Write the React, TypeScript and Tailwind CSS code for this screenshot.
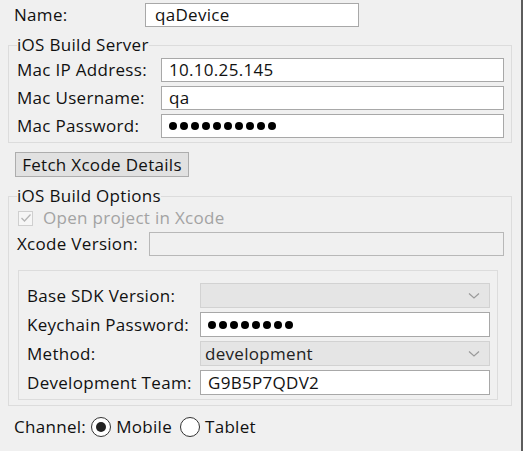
import React from 'react';

const font = { fontFamily: '"Open Sans", "Noto Sans", Arial, sans-serif' };

const Chevron = () => (
    <svg width="12" height="8" viewBox="0 0 12 8" className="shrink-0">
        <path d="M1 1.5 L6 6 L11 1.5" fill="none" stroke="#9a9a9a" strokeWidth="1.2" />
    </svg>
);

const TextBox = ({ value, className = '' }: { value?: string; className?: string }) => (
    <div className={`h-full flex-1 flex items-center bg-white border border-[#a8a8a8] px-[7px] text-[#111] ${className}`}>
        {value}
    </div>
);

const Dots = ({ count }: { count: number }) => (
    <div className="h-full flex-1 flex items-center bg-white border border-[#a8a8a8] px-[7px] gap-[3px]">
        {Array.from({ length: count }).map((_, i) => (
            <span key={i} className="w-[8px] h-[8px] rounded-full bg-black" />
        ))}
    </div>
);

const Combo = ({ value }: { value?: string }) => (
    <div className="h-full flex-1 flex items-center justify-between bg-[#e5e5e5] border border-[#d2d2d2] pl-[4px] pr-[9px] text-[#222]">
        <span>{value}</span>
        <Chevron />
    </div>
);

const Row = ({ label, labelW, h, children }: { label: string; labelW: string; h: string; children: React.ReactNode }) => (
    <div className={`flex items-center ${h}`}>
        <div className={`${labelW} shrink-0 text-[#111]`}>{label}</div>
        {children}
    </div>
);

export default function App() {
    return (
        <div className="w-[523px] h-[451px] bg-[#f0f0f0] border-r-2 border-[#5c5c5c] text-[17px] leading-[20px] tracking-[0.3px] overflow-hidden" style={font}>
            {/* Name */}
            <div className="mt-[3px] pl-[14px] flex items-center h-[24px]">
                <div className="w-[131px] text-[#111]">Name:</div>
                <div className="w-[214px] h-full flex items-center bg-white border border-[#a8a8a8] pl-[9px] text-[#111]">qaDevice</div>
            </div>

            {/* iOS Build Server */}
            <fieldset className="mt-[8px] ml-[8px] w-[504px] border border-[#dcdcdc] pl-[8px] pr-[7px] pb-[4px]">
                <legend className="px-0 text-[#111]">iOS Build Server</legend>
                <div className="pt-[3px] flex flex-col gap-[4px]">
                    <Row label="Mac IP Address:" labelW="w-[144px]" h="h-[24px]"><TextBox value="10.10.25.145" /></Row>
                    <Row label="Mac Username:" labelW="w-[144px]" h="h-[24px]"><TextBox value="qa" /></Row>
                    <Row label="Mac Password:" labelW="w-[144px]" h="h-[24px]"><Dots count={10} /></Row>
                </div>
            </fieldset>

            <button className="mt-[9px] ml-[15px] w-[174px] h-[25px] bg-[#e1e1e1] border border-[#adadad] text-[#111] flex items-center justify-center">
                Fetch Xcode Details
            </button>

            {/* iOS Build Options */}
            <fieldset className="mt-[9px] ml-[8px] w-[504px] border border-[#dcdcdc] pl-[8px] pr-[7px] pb-[5px]">
                <legend className="px-0 text-[#111]">iOS Build Options</legend>
                <div className="pt-[1px] h-[23px] flex items-center gap-[10px]">
                    <div className="ml-[1px] w-[15px] h-[15px] border border-[#cfcfcf] bg-[#f6f6f6] flex items-center justify-center">
                        <svg width="12" height="10" viewBox="0 0 12 10">
                            <path d="M1.5 5 L4.5 8 L10.5 1.5" fill="none" stroke="#b5b5b5" strokeWidth="1.3" />
                        </svg>
                    </div>
                    <span className="text-[#a3a3a3]">Open project in Xcode</span>
                </div>
                <div className="mt-[3px] flex items-center h-[24px]">
                    <div className="w-[132px] shrink-0 text-[#111]">Xcode Version:</div>
                    <div className="h-full flex-1 bg-[#f0f0f0] border border-[#b8b8b8]" />
                </div>

                <fieldset className="mt-[14px] ml-[1px] w-[480px] border border-[#dcdcdc] pl-[8px] pr-[7px] pt-[12px] pb-[4px]">
                    <div className="flex flex-col gap-[4px]">
                        <Row label="Base SDK Version:" labelW="w-[173px]" h="h-[25px]"><Combo /></Row>
                        <Row label="Keychain Password:" labelW="w-[173px]" h="h-[25px]"><Dots count={8} /></Row>
                        <Row label="Method:" labelW="w-[173px]" h="h-[25px]"><Combo value="development" /></Row>
                        <Row label="Development Team:" labelW="w-[173px]" h="h-[25px]"><TextBox value="G9B5P7QDV2" /></Row>
                    </div>
                </fieldset>
            </fieldset>

            {/* Channel */}
            <div className="mt-[11px] pl-[14px] h-[20px] flex items-center text-[#111]">
                <span>Channel:</span>
                <span className="ml-[5px] w-[20px] h-[20px] rounded-full border border-[#333] bg-white flex items-center justify-center">
                    <span className="w-[10px] h-[10px] rounded-full bg-[#222]" />
                </span>
                <span className="ml-[5px]">Mobile</span>
                <span className="ml-[8px] w-[20px] h-[20px] rounded-full border border-[#333] bg-white" />
                <span className="ml-[5px]">Tablet</span>
            </div>
        </div>
    );
}
